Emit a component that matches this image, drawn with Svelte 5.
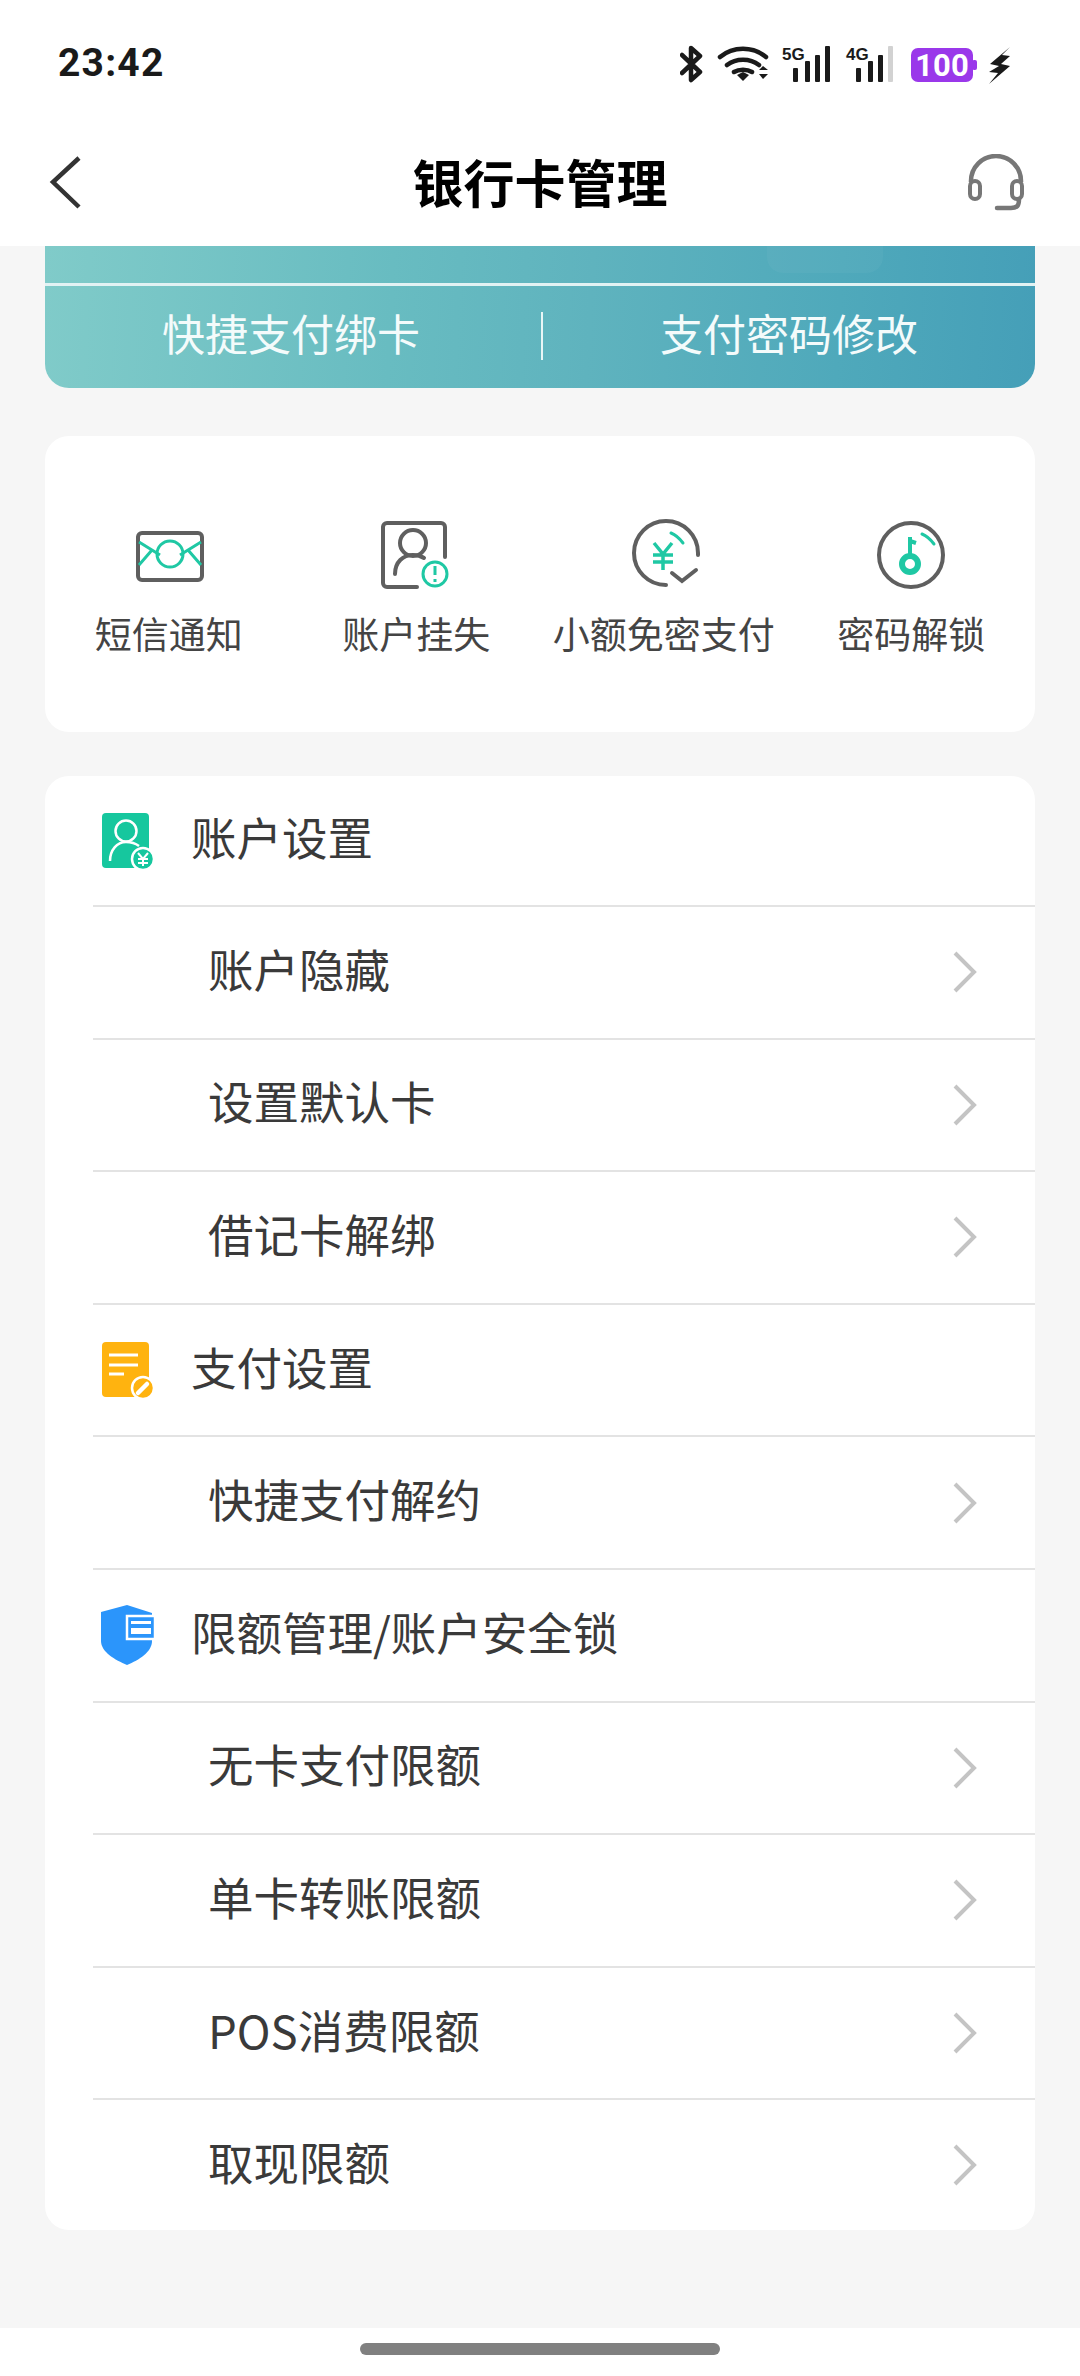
<script>
  const quick = [
    { id: 'sms', label: '短信通知' },
    { id: 'lost', label: '账户挂失' },
    { id: 'free', label: '小额免密支付' },
    { id: 'key', label: '密码解锁' }
  ];
  const sections = [
    { icon: 'acct', title: '账户设置', items: ['账户隐藏', '设置默认卡', '借记卡解绑'] },
    { icon: 'pay', title: '支付设置', items: ['快捷支付解约'] },
    { icon: 'shield', title: '限额管理/账户安全锁', items: ['无卡支付限额', '单卡转账限额', 'POS消费限额', '取现限额'] }
  ];
</script>

<div class="page">
  <header class="top">
    <div class="status">
      <span class="time">23:42</span>
      <svg class="sys" width="340" height="44" viewBox="680 44 340 44">
        <path d="M682 55l18 17-9 8V48l9 8-18 17" fill="none" stroke="#1a1a1a" stroke-width="4.5" stroke-linejoin="round" stroke-linecap="round"/>
        <path d="M720 57c13-11 33-11 46 0M727 65c9-7 23-7 32 0M734 72c5-3 13-3 18 0" fill="none" stroke="#1a1a1a" stroke-width="4.5" stroke-linecap="round"/>
        <path d="M737 75l6-3 6 3-6 6z" fill="#1a1a1a"/>
        <path d="M759 70l4-4 5 4zM759 74h9l-5 5z" fill="#1a1a1a"/>
        <text x="782" y="60" class="net">5G</text>
        <g fill="#1a1a1a">
          <rect x="793" y="68" width="5" height="14" rx="1"/><rect x="805" y="61" width="5" height="21" rx="1"/><rect x="815" y="55" width="5" height="27" rx="1"/><rect x="825" y="46" width="5" height="36" rx="1"/>
        </g>
        <text x="846" y="60" class="net">4G</text>
        <g fill="#1a1a1a">
          <rect x="856" y="68" width="5" height="14" rx="1"/><rect x="868" y="61" width="5" height="21" rx="1"/><rect x="878" y="55" width="5" height="27" rx="1"/>
        </g>
        <rect x="888" y="46" width="5" height="36" rx="1" fill="#d2d2d2"/>
        <rect x="911" y="48" width="62" height="34" rx="7" fill="#9a38ea"/>
        <rect x="972" y="60" width="5" height="10" rx="2" fill="#9a38ea"/>
        <text x="942" y="76" class="batt" text-anchor="middle">100</text>
        <path d="M1010 47L990 64l9 2-10 6 9 1-9 11 21-18-9-2 9-8-8-1z" fill="#1a1a1a"/>
      </svg>
    </div>
    <nav class="bar">
      <svg class="back" width="36" height="54" viewBox="0 0 36 54"><path d="M33 3L7 27l26 25" transform="translate(0,-1)" fill="none" stroke="#333" stroke-width="4.5"/></svg>
      <h1>银行卡管理</h1>
      <svg class="head" width="60" height="60" viewBox="0 0 60 60">
        <path d="M5 28V27a25 25 0 0 1 50 0v1" fill="none" stroke="#777" stroke-width="4.5"/>
        <rect x="4" y="27" width="10" height="18" rx="5" fill="none" stroke="#777" stroke-width="4"/>
        <rect x="46" y="27" width="10" height="18" rx="5" fill="none" stroke="#777" stroke-width="4"/>
        <path d="M53 45c0 7-2 9-8 9H31" fill="none" stroke="#777" stroke-width="4.5" stroke-linecap="round"/>
      </svg>
    </nav>
  </header>

  <main>
    <section class="banner">
      <b class="mark"></b>
      <div class="strip"></div>
      <div class="actions">
        <span>快捷支付绑卡</span>
        <i></i>
        <span>支付密码修改</span>
      </div>
    </section>

    <section class="card quick">
      {#each quick as q}
        <div class="qitem">
          <svg width="72" height="72" viewBox="0 0 72 72">
            {#if q.id === 'sms'}
              <rect x="5" y="14" width="64" height="47" rx="4" fill="none" stroke="#5f5f5f" stroke-width="4"/>
              <circle cx="37" cy="35" r="13" fill="none" stroke="#1fc8a4" stroke-width="3"/>
              <path d="M6 23l21 13M68 23L47 36M6 46l13-15M68 46L55 31" fill="none" stroke="#1fc8a4" stroke-width="3"/>
            {:else if q.id === 'lost'}
              <path d="M65 38V8a4 4 0 0 0-4-4H7a4 4 0 0 0-4 4v56a4 4 0 0 0 4 4h30" fill="none" stroke="#5f5f5f" stroke-width="4" stroke-linecap="round"/>
              <circle cx="33" cy="24" r="13" fill="none" stroke="#5f5f5f" stroke-width="4"/>
              <path d="M15 55c0-12 8-19 18-19 5 0 8 1 11 3" fill="none" stroke="#5f5f5f" stroke-width="4" stroke-linecap="round"/>
              <circle cx="55" cy="55" r="12" fill="#fff" stroke="#1fc8a4" stroke-width="3"/>
              <path d="M55 47v9M55 60v3" stroke="#1fc8a4" stroke-width="3"/>
            {:else if q.id === 'free'}
              <path d="M38 66a32 32 0 1 1 32-32v2" fill="none" stroke="#5f5f5f" stroke-width="4" stroke-linecap="round"/>
              <path d="M43 14c5 2 9 6 12 10" fill="none" stroke="#1fc8a4" stroke-width="3" stroke-linecap="round"/>
              <path d="M26 24l9 11 9-11M25 36h20M25 43h20M35 36v15" fill="none" stroke="#1fc8a4" stroke-width="3.5"/>
              <path d="M44 54l10 8 14-11" fill="none" stroke="#5f5f5f" stroke-width="4" stroke-linecap="round"/>
            {:else}
              <circle cx="36" cy="36" r="32" fill="none" stroke="#5f5f5f" stroke-width="4"/>
              <circle cx="35" cy="45" r="8" fill="none" stroke="#1fc8a4" stroke-width="6"/>
              <path d="M35 36V18M35 22l6 2" fill="none" stroke="#1fc8a4" stroke-width="4"/>
              <path d="M47 15c5 2 9 6 12 10" fill="none" stroke="#1fc8a4" stroke-width="3" stroke-linecap="round"/>
            {/if}
          </svg>
          <span>{q.label}</span>
        </div>
      {/each}
    </section>

    <section class="card list">
      {#each sections as s, si}
        <div class="row head-row" class:first={si === 0}>
          <svg class="sicon" width="60" height="64" viewBox="0 0 60 64">
            {#if s.icon === 'acct'}
              <rect x="2" y="4" width="47" height="55" rx="4" fill="#16c79e"/>
              <circle cx="26" cy="22" r="10.5" fill="none" stroke="#fff" stroke-width="2.5"/>
              <path d="M10 52c0-11 7-19 16-19 5 0 9 1 13 4" fill="none" stroke="#fff" stroke-width="2.5"/>
              <circle cx="43" cy="50" r="11" fill="#16c79e" stroke="#fff" stroke-width="2.5"/>
              <path d="M38 44l5 6 5-6M38 50h10M38 54h10M43 50v7" fill="none" stroke="#fff" stroke-width="2"/>
            {:else if s.icon === 'pay'}
              <rect x="2" y="4" width="47" height="55" rx="4" fill="#ffb30f"/>
              <path d="M9 17h29M9 27h29M9 36h15" stroke="#fff" stroke-width="3"/>
              <circle cx="43" cy="50" r="11" fill="#ffb30f" stroke="#fff" stroke-width="2.5"/>
              <path d="M38 55l9-9" stroke="#fff" stroke-width="4.5" stroke-linecap="round"/>
            {:else}
              <path d="M28 3l25 8v28c0 11-13 19-25 24C16 58 2 50 2 39V10z" fill="#2b95fb" transform="translate(-1 -1)"/>
              <rect x="27" y="13" width="28" height="23" fill="#2b95fb" stroke="#fff" stroke-width="2.5"/>
              <rect x="31" y="18" width="20" height="3" fill="#fff"/>
              <rect x="31" y="25" width="20" height="6" fill="#fff"/>
            {/if}
          </svg>
          <span class="stitle">{s.title}</span>
        </div>
        {#each s.items as item, i}
          <div class="row sub" class:last={si === sections.length - 1 && i === s.items.length - 1}>
            <span>{item}</span>
            <svg width="26" height="44" viewBox="0 0 26 44"><path d="M3 3l19 19L3 41" fill="none" stroke="#c4c4c4" stroke-width="4"/></svg>
          </div>
        {/each}
      {/each}
    </section>
  </main>

  <footer><b></b></footer>
</div>

<style>
  :global(body) {
    margin: 0;
    background: #f6f6f6;
  }
  .page {
    width: 1080px;
    height: 2376px;
    display: flex;
    flex-direction: column;
    font-family: "Noto Sans CJK SC", "Noto Sans", sans-serif;
    color: #333;
    overflow: hidden;
  }
  .top {
    background: #fff;
    height: 246px;
    flex: none;
  }
  .status {
    height: 125px;
    display: flex;
    justify-content: space-between;
    align-items: flex-start;
    padding: 0 60px 0 58px;
    box-sizing: border-box;
  }
  .time {
    font: 700 39px/1 Roboto, sans-serif;
    color: #1a1a1a;
    margin-top: 44px;
    letter-spacing: 1.2px;
  }
  .sys {
    margin-top: 44px;
  }
  .net {
    font: 700 17px "Liberation Sans", sans-serif;
    fill: #1a1a1a;
  }
  .batt {
    font: 700 31px Roboto, sans-serif;
    fill: #fff;
  }
  .bar {
    height: 121px;
    display: flex;
    align-items: center;
    justify-content: space-between;
    padding: 0 54px 0 46px;
    position: relative;
  }
  .bar h1 {
    position: absolute;
    left: 0;
    right: 0;
    text-align: center;
    margin: 0;
    font-size: 51px;
    font-weight: 700;
    color: #000;
    line-height: 121px;
    top: -4px;
  }
  .back { margin-top: -6px; }
  .head { margin-top: -3px; }
  main {
    flex: 1;
    padding: 0 45px;
    display: flex;
    flex-direction: column;
    background: #f6f6f6;
  }
  .banner {
    height: 142px;
    flex: none;
    position: relative;
    border-radius: 0 0 24px 24px;
    background: linear-gradient(93deg, #80cbc9 0%, #68bcc1 35%, #5fb3be 55%, #4fa9bb 80%, #459fb8 100%);
    color: #f4fbfb;
    display: flex;
    flex-direction: column;
  }
  .mark {
    position: absolute;
    left: 722px;
    top: 0;
    width: 116px;
    height: 27px;
    border-radius: 0 0 16px 16px;
    background: rgba(255, 255, 255, 0.035);
  }
  .strip {
    height: 37px;
    border-bottom: 3px solid #e2f2f3;
    flex: none;
  }
  .actions {
    flex: 1;
    display: flex;
    align-items: center;
    font-size: 43px;
    line-height: 1;
    padding-bottom: 9px;
  }
  .actions span {
    flex: 1;
    text-align: center;
  }
  .actions i {
    width: 2px;
    height: 48px;
    background: #e9f6f6;
    margin: 7px 0 0 4px;
  }
  .card {
    background: #fff;
    border-radius: 24px;
  }
  .quick {
    margin-top: 48px;
    height: 296px;
    display: grid;
    grid-template-columns: repeat(4, 1fr);
    flex: none;
    padding-top: 83px;
    box-sizing: border-box;
  }
  .qitem {
    display: flex;
    flex-direction: column;
    align-items: center;
    gap: 16px;
    font-size: 37px;
    line-height: 52px;
    color: #444;
    white-space: nowrap;
  }
  .list {
    margin-top: 44px;
    padding-left: 48px;
    flex: none;
  }
  .row {
    height: 132.6px;
    box-sizing: border-box;
    border-bottom: 2px solid #e3e3e3;
    display: flex;
    align-items: center;
    font-size: 45.5px;
    color: #3a3a3a;
  }
  .row span { margin-top: -9px; }
  .row.first { height: 131px; }
  .row.last { border-bottom: none; height: 130px; }
  .sicon { margin-left: 7px; flex: none; }
  .stitle { margin-left: 31px; }
  .sub {
    padding-left: 115px;
    padding-right: 57px;
    justify-content: space-between;
  }
  footer {
    height: 48px;
    flex: none;
    background: #fff;
    display: flex;
    justify-content: center;
    padding-top: 15px;
    box-sizing: border-box;
  }
  footer b {
    width: 360px;
    height: 12px;
    border-radius: 6px;
    background: #808080;
  }
</style>
